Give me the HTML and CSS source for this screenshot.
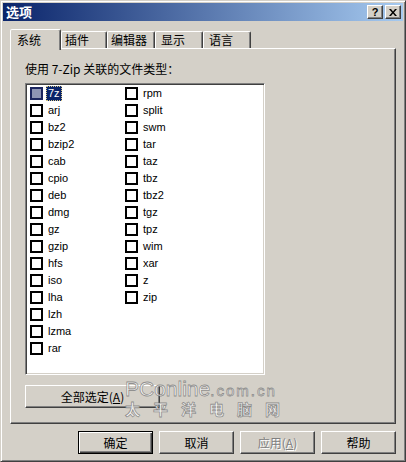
FILE: index.html
```html
<!DOCTYPE html>
<html lang="zh-CN">
<head>
    <meta charset="UTF-8">
    <title>选项</title>
    <link rel="stylesheet" href="styles.css">
</head>
<body>
    <div class="window">
        <div class="titlebar">
            <span class="title">选项</span>
            <div class="caption-buttons">
                <span class="cap-btn help">?</span>
                <span class="cap-btn close">
                    <svg width="8" height="7" viewBox="0 0 8 7">
                        <path d="M0 0h2l2 2.5L6 0h2L5 3.5 8 7H6L4 4.5 2 7H0l3-3.5z" fill="#000"/>
                    </svg>
                </span>
            </div>
        </div>

        <div class="main">
            <div class="tabs">
                <div class="tab active">系统</div>
                <div class="tab tab-plugins">插件</div>
                <div class="tab tab-editor">编辑器</div>
                <div class="tab">显示</div>
                <div class="tab">语言</div>
            </div>

            <div class="panel">
                <p class="label">使用 7-Zip 关联的文件类型：</p>
                <div class="listbox" id="listbox">
                    <!-- columns filled by script -->
                </div>
                <button class="btn select-all">全部选定(<u>A</u>)</button>
            </div>

            <div class="actions">
                <button class="btn default">确定</button>
                <button class="btn">取消</button>
                <button class="btn disabled">应用(<u>A</u>)</button>
                <button class="btn">帮助</button>
            </div>
        </div>

        <div class="watermark">
            <div class="wm-top"><span class="wm-big">PConline</span><span class="wm-small">.com.cn</span></div>
            <div class="wm-cn">太平洋电脑网</div>
        </div>
    </div>

    <script>
        // File types, one array per column
        const columns = [
            ['7z', 'arj', 'bz2', 'bzip2', 'cab', 'cpio', 'deb', 'dmg', 'gz', 'gzip', 'hfs', 'iso', 'lha', 'lzh', 'lzma', 'rar'],
            ['rpm', 'split', 'swm', 'tar', 'taz', 'tbz', 'tbz2', 'tgz', 'tpz', 'wim', 'xar', 'z', 'zip']
        ];

        const listbox = document.getElementById('listbox');

        columns.forEach(types => {
            const col = document.createElement('ul');
            col.className = 'col';
            types.forEach(type => {
                const item = document.createElement('li');
                item.className = type === '7z' ? 'item selected' : 'item';
                item.innerHTML = `<span class="check"></span><span class="name">${type}</span>`;
                col.appendChild(item);
            });
            listbox.appendChild(col);
        });
    </script>
</body>
</html>
```

FILE: styles.css
```css
body {
    margin: 0;
    background: #d4d0c8;
    font-family: "Noto Sans CJK SC", "Liberation Sans", sans-serif;
    font-size: 12px;
    color: #000;
}
.window {
    position: relative;
    width: 406px;
    height: 462px;
    box-sizing: border-box;
    padding: 2px;
    background: #d4d0c8;
    border: 1px solid;
    border-color: #d4d0c8 #404040 #404040 #d4d0c8;
    box-shadow: inset 1px 1px #fff, inset -1px -1px #808080;
    overflow: hidden;
}
.titlebar {
    height: 18px;
    display: flex;
    align-items: center;
    padding: 0 2px 0 3px;
    background: linear-gradient(to right, #0a246a, #a6caf0);
    color: #fff;
}
.title {
    font-size: 13px;
    font-weight: bold;
    line-height: 18px;
}
.caption-buttons {
    margin-left: auto;
    display: flex;
    gap: 2px;
}
.cap-btn {
    width: 16px;
    height: 14px;
    box-sizing: border-box;
    display: flex;
    align-items: center;
    justify-content: center;
    background: #d4d0c8;
    border: 1px solid;
    border-color: #fff #404040 #404040 #fff;
    box-shadow: inset -1px -1px #808080;
    color: #000;
}
.cap-btn.help {
    font-family: "Liberation Sans", sans-serif;
    font-weight: bold;
    font-size: 11px;
    line-height: 12px;
}
.main {
    padding: 8px 7px 5px;
}
.tabs {
    position: relative;
    z-index: 1;
    display: flex;
    align-items: flex-end;
    height: 19px;
}
.tab {
    height: 17px;
    box-sizing: border-box;
    width: 48px;
    padding: 1px 0 0 5px;
    line-height: 14px;
    border: 1px solid;
    border-bottom: none;
    border-color: #fff #404040 transparent #fff;
    border-radius: 2px 2px 0 0;
    box-shadow: inset -1px 0 #808080;
    white-space: nowrap;
}
.tab.active {
    width: 51px;
    height: 21px;
    margin-bottom: -2px;
    padding: 3px 0 0 6px;
    background: #d4d0c8;
}
.tab-plugins {
    width: 46px;
    padding-left: 3px;
}
.tab-editor {
    padding-left: 3px;
}
.panel {
    height: 376px;
    box-sizing: border-box;
    padding: 13px 0 0 14px;
    border: 1px solid;
    border-color: #fff #404040 #404040 #fff;
    box-shadow: inset -1px -1px #808080;
}
.label {
    margin: 0;
    height: 14px;
    line-height: 14px;
}
.listbox {
    display: flex;
    width: 240px;
    height: 292px;
    box-sizing: border-box;
    margin-top: 7px;
    padding: 1px 0 0 1px;
    background: #fff;
    border: 1px solid;
    border-color: #808080 #fff #fff #808080;
    box-shadow: inset 1px 1px #404040, inset -1px -1px #d4d0c8;
}
.col {
    list-style: none;
    margin: 0;
    padding: 0;
    width: 95px;
}
.item {
    display: flex;
    align-items: center;
    height: 17px;
    font-family: "Liberation Sans", sans-serif;
    font-size: 11px;
}
.check {
    width: 13px;
    height: 13px;
    box-sizing: border-box;
    margin: 0 3px 0 3px;
    border: 2px solid #000;
    background: #fff;
}
.name {
    padding: 0 2px;
    line-height: 15px;
}
.item.selected .check {
    background: #8e95b5;
    border-color: #1c2660;
}
.item.selected .name {
    background: #0a246a;
    color: #fff;
    outline: 1px dotted #d8c888;
    outline-offset: -1px;
}
.btn {
    height: 23px;
    width: 75px;
    box-sizing: border-box;
    padding: 0;
    background: #d4d0c8;
    border: 1px solid;
    border-color: #fff #404040 #404040 #fff;
    box-shadow: inset -1px -1px #808080;
    font-family: "Noto Sans CJK SC", "Liberation Sans", sans-serif;
    font-size: 12px;
    color: #000;
}
.btn.default {
    border-color: #000;
    box-shadow: inset 1px 1px #fff, inset -1px -1px #404040, inset -2px -2px #808080;
}
.btn.disabled {
    color: #808080;
    text-shadow: 1px 1px #fff;
}
.select-all {
    display: block;
    width: 135px;
    margin-top: 10px;
}
.actions {
    display: flex;
    justify-content: flex-end;
    gap: 6px;
    margin-top: 7px;
}
.watermark {
    position: absolute;
    left: 124px;
    top: 378px;
    pointer-events: none;
    color: rgba(255, 255, 255, 0.85);
    -webkit-text-stroke: 0.8px rgba(105, 105, 105, 0.7);
    font-family: "Liberation Sans", sans-serif;
}
.wm-top {
    height: 22px;
    line-height: 20px;
    white-space: nowrap;
}
.wm-big {
    font-size: 21px;
}
.wm-small {
    font-size: 15px;
    letter-spacing: 2px;
}
.wm-cn {
    font-family: "Noto Sans CJK SC", sans-serif;
    font-weight: bold;
    font-size: 15px;
    line-height: 16px;
    letter-spacing: 13px;
    white-space: nowrap;
}
```
